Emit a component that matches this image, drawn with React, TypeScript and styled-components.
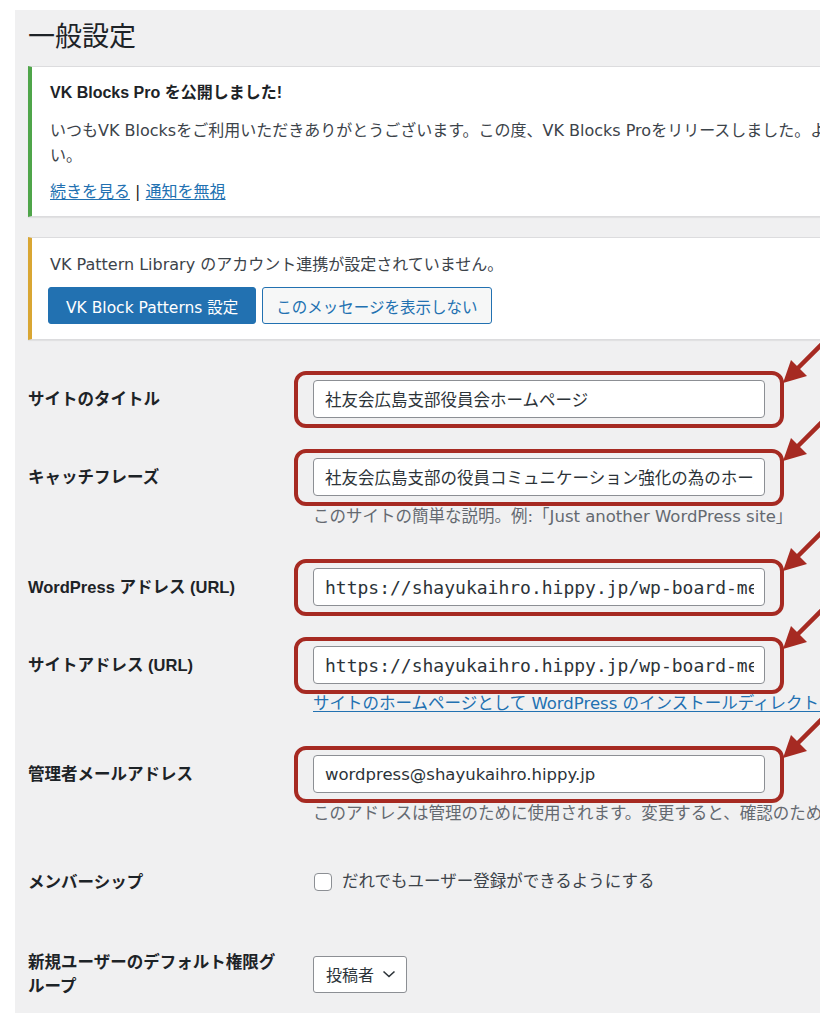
import React from "react";
import styled, { createGlobalStyle } from "styled-components";

const GlobalStyle = createGlobalStyle`
  html, body {
    margin: 0;
    padding: 0;
    background: #fff;
  }
  body {
    font-family: "DejaVu Sans", "Noto Sans CJK JP", sans-serif;
    color: #3c434a;
  }
`;

const boldFont = `"Liberation Sans", "Noto Sans CJK JP", sans-serif`;

const Page = styled.div`
  padding: 10px 19px 11px 15px;
`;

const Panel = styled.main`
  box-sizing: border-box;
  height: 1003px;
  padding: 9px 0 0 13px;
  background: #f0f0f1;
  overflow: hidden;
`;

const Title = styled.h1`
  margin: 0 0 11px;
  font-family: ${boldFont};
  font-size: 27px;
  font-weight: 400;
  line-height: 36px;
  color: #1d2327;
`;

const Notice = styled.div<{ $tone: "success" | "warning" }>`
  margin-right: -120px;
  padding: ${(p) => (p.$tone === "success" ? "15px 0 13px 18px" : "16px 0 15px 18px")};
  background: #fff;
  border: 1px solid #dcdcde;
  border-left: 4px solid ${(p) => (p.$tone === "success" ? "#4fa54a" : "#d9a633")};
  box-shadow: 0 1px 1px rgba(0, 0, 0, 0.06);
  font-size: 16px;
  white-space: nowrap;

  & + & {
    margin-top: 20px;
  }
`;

const NoticeHead = styled.div`
  font-family: ${boldFont};
  font-size: 16px;
  font-weight: 700;
  line-height: 22px;
  color: #1d2327;
`;

const NoticeText = styled.p<{ $gap?: number }>`
  margin: ${(p) => p.$gap ?? 0}px 0 0;
  line-height: ${(p) => (p.$gap ? 25 : 22)}px;
`;

const NoticeLinks = styled.div`
  margin-top: 13px;
  line-height: 22px;
  color: #1d2327;
`;

const TextLink = styled.a`
  color: #2271b1;
  text-decoration: underline;
  text-underline-offset: 2px;
`;

const ButtonRow = styled.div`
  display: flex;
  gap: 6px;
  margin: 11px 0 0 -2px;
`;

const Button = styled.button<{ $primary?: boolean }>`
  height: 37px;
  padding: 0 ${(p) => (p.$primary ? 17 : 13)}px;
  border: 1px solid #2271b1;
  border-radius: 3px;
  background: ${(p) => (p.$primary ? "#2271b1" : "#f6f7f7")};
  color: ${(p) => (p.$primary ? "#fff" : "#2271b1")};
  font-family: inherit;
  font-size: 15.5px;
`;

const Form = styled.div`
  margin-top: 20px;
`;

const Row = styled.div<{ $top: number; $bottom: number; $center?: boolean }>`
  display: grid;
  grid-template-columns: 285px auto;
  align-items: ${(p) => (p.$center ? "center" : "start")};
  padding: ${(p) => p.$top}px 0 ${(p) => p.$bottom}px;
`;

const Label = styled.div<{ $lh?: number }>`
  width: 256px;
  font-family: ${boldFont};
  font-size: 16.5px;
  font-weight: 700;
  line-height: ${(p) => p.$lh ?? 38}px;
  color: #1d2327;
`;

const Field = styled.div`
  white-space: nowrap;
`;

const Highlight = styled.div`
  position: relative;
  width: 452px;

  &::before {
    content: "";
    position: absolute;
    inset: -9px -19px -10px -19px;
    border: 4px solid #a62a22;
    border-radius: 12px;
    pointer-events: none;
  }
`;

const TextInput = styled.input<{ $mono?: boolean }>`
  display: block;
  box-sizing: border-box;
  width: 452px;
  height: 38px;
  padding: 0 10px 0 11px;
  border: 1px solid #8c8f94;
  border-radius: 4px;
  background: #fff;
  color: #2c3338;
  font-family: ${(p) => (p.$mono ? '"DejaVu Sans Mono", monospace' : "inherit")};
  font-size: ${(p) => (p.$mono ? 18 : 16.5)}px;
`;

const Description = styled.p`
  margin: 10px 0 0;
  font-size: 16.5px;
  line-height: 22px;
  color: #646970;
`;

const HelpLink = styled(TextLink)`
  display: block;
  margin-top: 9px;
  font-size: 16.5px;
  line-height: 22px;
`;

const CheckLine = styled.label`
  display: flex;
  align-items: center;
  gap: 10px;
  font-size: 16.5px;
  line-height: 22px;
  color: #3c434a;
`;

const Checkbox = styled.input`
  appearance: none;
  box-sizing: border-box;
  width: 18px;
  height: 18px;
  margin: 0 0 0 1px;
  border: 1px solid #8c8f94;
  border-radius: 4px;
  background: #fff;
`;

const RoleSelect = styled.div`
  display: inline-flex;
  align-items: center;
  gap: 8px;
  box-sizing: border-box;
  width: 94px;
  height: 37px;
  padding: 0 10px 0 12px;
  border: 1px solid #8c8f94;
  border-radius: 3px;
  background: #fff;
  font-size: 16px;
  color: #2c3338;
`;

const ArrowMark = styled.svg`
  position: absolute;
  left: calc(100% + 15px);
  top: -42px;
  width: 50px;
  height: 50px;
  overflow: visible;
`;

function Arrow() {
  return (
    <ArrowMark viewBox="0 0 50 50">
      <line x1="44" y1="4" x2="17" y2="31" stroke="#a62a22" strokeWidth="4.5" strokeLinecap="round" />
      <polygon points="3,45 27,38 11,22" fill="#a62a22" />
    </ArrowMark>
  );
}

function Marked({ value, mono }: { value: string; mono?: boolean }) {
  return (
    <Highlight>
      <TextInput type="text" value={value} readOnly $mono={mono} />
      <Arrow />
    </Highlight>
  );
}

export default function App() {
  return (
    <>
      <GlobalStyle />
      <Page>
        <Panel>
          <Title>一般設定</Title>

          <Notice $tone="success">
            <NoticeHead>VK Blocks Pro を公開しました!</NoticeHead>
            <NoticeText $gap={14}>
              いつもVK Blocksをご利用いただきありがとうございます。この度、VK Blocks Proをリリースしました。より
              <br />
              い。
            </NoticeText>
            <NoticeLinks>
              <TextLink href="#">続きを見る</TextLink> | <TextLink href="#">通知を無視</TextLink>
            </NoticeLinks>
          </Notice>

          <Notice $tone="warning">
            <NoticeText>VK Pattern Library のアカウント連携が設定されていません。</NoticeText>
            <ButtonRow>
              <Button $primary>VK Block Patterns 設定</Button>
              <Button>このメッセージを表示しない</Button>
            </ButtonRow>
          </Notice>

          <Form>
            <Row $top={20} $bottom={20}>
              <Label>サイトのタイトル</Label>
              <Field>
                <Marked value="社友会広島支部役員会ホームページ" />
              </Field>
            </Row>

            <Row $top={20} $bottom={20}>
              <Label>キャッチフレーズ</Label>
              <Field>
                <Marked value="社友会広島支部の役員コミュニケーション強化の為のホームページ" />
                <Description>このサイトの簡単な説明。例:「Just another WordPress site」</Description>
              </Field>
            </Row>

            <Row $top={20} $bottom={20}>
              <Label>WordPress アドレス (URL)</Label>
              <Field>
                <Marked mono value="https://shayukaihro.hippy.jp/wp-board-member" />
              </Field>
            </Row>

            <Row $top={20} $bottom={20}>
              <Label>サイトアドレス (URL)</Label>
              <Field>
                <Marked mono value="https://shayukaihro.hippy.jp/wp-board-member" />
                <HelpLink href="#">
                  サイトのホームページとして WordPress のインストールディレクトリとは異なる場所を使用する
                </HelpLink>
              </Field>
            </Row>

            <Row $top={20} $bottom={20}>
              <Label>管理者メールアドレス</Label>
              <Field>
                <Marked value="wordpress@shayukaihro.hippy.jp" />
                <Description>
                  このアドレスは管理のために使用されます。変更すると、確認のため新しいアドレスにメールを送信します。
                </Description>
              </Field>
            </Row>

            <Row $top={26} $bottom={26}>
              <Label $lh={22}>メンバーシップ</Label>
              <Field>
                <CheckLine>
                  <Checkbox type="checkbox" />
                  だれでもユーザー登録ができるようにする
                </CheckLine>
              </Field>
            </Row>

            <Row $top={31} $bottom={15} $center>
              <Label $lh={24}>新規ユーザーのデフォルト権限グループ</Label>
              <Field>
                <RoleSelect>
                  投稿者
                  <svg width="14" height="8" viewBox="0 0 14 8">
                    <path d="M1.5 1.5 7 6.5l5.5-5" fill="none" stroke="#2c3338" strokeWidth="1.6" />
                  </svg>
                </RoleSelect>
              </Field>
            </Row>
          </Form>
        </Panel>
      </Page>
    </>
  );
}
